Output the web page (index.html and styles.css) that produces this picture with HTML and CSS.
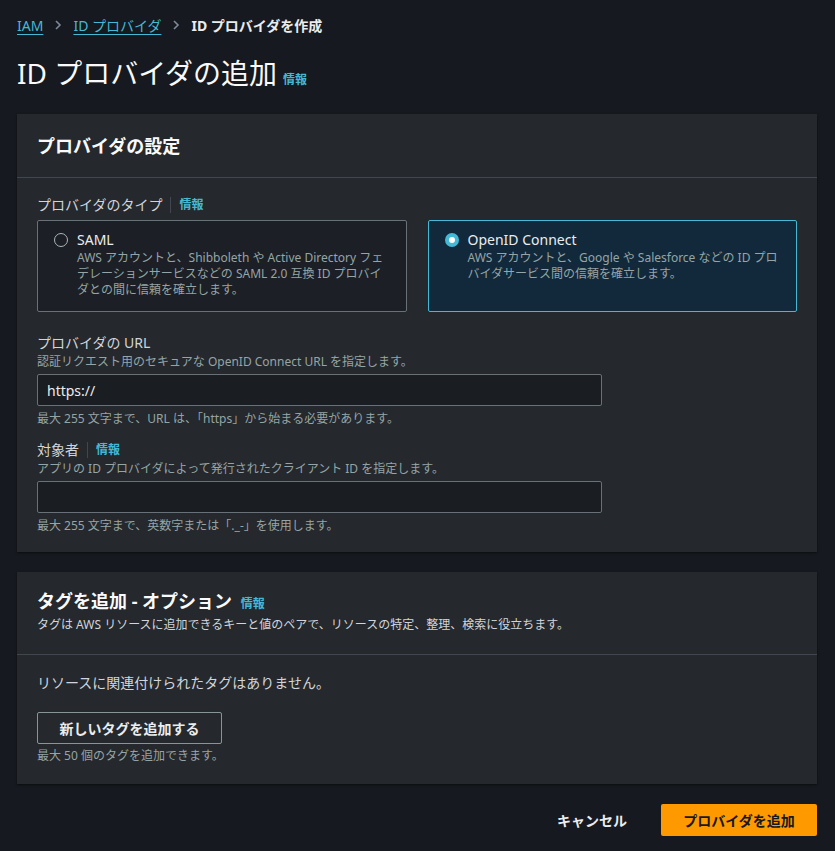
FILE: index.html
```html
<!DOCTYPE html>
<html lang="ja">
<head>
<meta charset="utf-8">
<link rel="stylesheet" href="styles.css">
</head>
<body>
<div class="page">
  <nav class="crumbs">
    <a class="crumb-link">IAM</a>
    <svg class="chev" width="12" height="12" viewBox="0 0 12 12"><path d="M4 2l4 4-4 4" fill="none" stroke="#7d8998" stroke-width="1.6"/></svg>
    <a class="crumb-link">ID プロバイダ</a>
    <svg class="chev" width="12" height="12" viewBox="0 0 12 12"><path d="M4 2l4 4-4 4" fill="none" stroke="#7d8998" stroke-width="1.6"/></svg>
    <span class="crumb-current">ID プロバイダを作成</span>
  </nav>

  <h1 class="page-title">ID プロバイダの追加 <a class="info">情報</a></h1>

  <section class="panel">
    <header class="panel-head">
      <h2 class="panel-title">プロバイダの設定</h2>
    </header>
    <div class="panel-body">
      <div class="field type-field">
        <div class="label">プロバイダのタイプ<span class="sep"></span><a class="info">情報</a></div>
        <div class="tiles">
          <div class="tile">
            <span class="radio"></span>
            <div class="tile-text">
              <div class="tile-name">SAML</div>
              <div class="tile-desc">AWS アカウントと、Shibboleth や Active Directory フェデレーションサービスなどの SAML 2.0 互換 ID プロバイダとの間に信頼を確立します。</div>
            </div>
          </div>
          <div class="tile selected">
            <span class="radio on"></span>
            <div class="tile-text">
              <div class="tile-name">OpenID Connect</div>
              <div class="tile-desc">AWS アカウントと、Google や Salesforce などの ID プロバイダサービス間の信頼を確立します。</div>
            </div>
          </div>
        </div>
      </div>

      <div class="field">
        <div class="label">プロバイダの URL</div>
        <div class="desc">認証リクエスト用のセキュアな OpenID Connect URL を指定します。</div>
        <div class="input">https://</div>
        <div class="hint">最大 255 文字まで、URL は、「https」から始まる必要があります。</div>
      </div>

      <div class="field">
        <div class="label">対象者<span class="sep"></span><a class="info">情報</a></div>
        <div class="desc">アプリの ID プロバイダによって発行されたクライアント ID を指定します。</div>
        <div class="input"></div>
        <div class="hint">最大 255 文字まで、英数字または「._-」を使用します。</div>
      </div>
    </div>
  </section>

  <section class="panel">
    <header class="panel-head tags-head">
      <h2 class="panel-title">タグを追加 - オプション <a class="info">情報</a></h2>
      <div class="head-desc">タグは AWS リソースに追加できるキーと値のペアで、リソースの特定、整理、検索に役立ちます。</div>
    </header>
    <div class="panel-body tags-body">
      <div class="empty">リソースに関連付けられたタグはありません。</div>
      <button class="btn-normal">新しいタグを追加する</button>
      <div class="hint">最大 50 個のタグを追加できます。</div>
    </div>
  </section>

  <div class="actions">
    <button class="btn-link">キャンセル</button>
    <button class="btn-primary">プロバイダを追加</button>
  </div>
</div>
</body>
</html>
```

FILE: styles.css
```css
* { box-sizing: border-box; }
html, body { margin: 0; padding: 0; }
body {
  background: #16191f;
  color: #d1d5db;
  font-family: "Noto Sans", "Noto Sans CJK JP", sans-serif;
  font-size: 14px;
}
.page {
  padding: 14px 18px 14px 17px;
}
.crumbs {
  display: flex;
  align-items: center;
  gap: 8px;
  height: 22px;
  font-size: 14px;
}
.crumb-link {
  color: #44b9d6;
  text-decoration: underline;
  text-underline-offset: 3px;
}
.chev { margin: 0 1px; }
.crumb-current {
  color: #eaeded;
  font-weight: 700;
}
.page-title {
  margin: 21px 0 0;
  font-size: 28px;
  font-weight: 400;
  color: #fafafa;
  line-height: 32px;
  display: flex;
  align-items: baseline;
  gap: 6px;
}
.info {
  color: #44b9d6;
  font-size: 12px;
  font-weight: 700;
}
.panel {
  background: #25282d;
  box-shadow: 0 1px 2px rgba(0,0,0,0.5);
  margin-top: 18px;
}
.panel + .panel { margin-top: 20px; }
.panel-head {
  padding: 16px 20px;
  border-bottom: 1px solid #414750;
  height: 64px;
  display: flex;
  flex-direction: column;
  justify-content: center;
}
.panel-title {
  margin: 0;
  font-size: 18px;
  font-weight: 700;
  color: #fafafa;
  line-height: 24px;
}
.panel-title .info { margin-left: 4px; }
.panel-body {
  padding: 16px 20px 18px;
}
.field + .field { margin-top: 12px; }
.type-field + .field { margin-top: 20px; }
.label {
  display: flex;
  align-items: center;
  font-size: 14px;
  color: #d1d5db;
  line-height: 22px;
}
.sep {
  display: inline-block;
  width: 1px;
  height: 16px;
  background: #414750;
  margin: 0 8px;
}
.tiles {
  display: grid;
  grid-template-columns: 1fr 1fr;
  gap: 21px;
  margin-top: 4px;
}
.tile {
  display: flex;
  gap: 9px;
  border: 1px solid #687078;
  background: #1c1f25;
  padding: 9px 16px 12px 16px;
  height: 92px;
  border-radius: 2px;
}
.tile.selected {
  border-color: #44b9d6;
  background: #12293b;
}
.radio {
  flex: none;
  width: 14px;
  height: 14px;
  border-radius: 50%;
  border: 1.5px solid #aab7b8;
  margin-top: 3px;
}
.radio.on {
  border: 4px solid #44b9d6;
  background: #fff;
}
.tile-name {
  color: #eaeded;
  font-size: 14px;
  line-height: 20px;
}
.tile-desc {
  color: #95a5a6;
  font-size: 12px;
  line-height: 16px;
}
.desc {
  color: #95a5a6;
  font-size: 12px;
  line-height: 16px;
}
.input {
  margin-top: 4px;
  width: 565px;
  height: 32px;
  border: 1px solid #687078;
  background: #1a1d22;
  border-radius: 2px;
  padding: 0 9px;
  display: flex;
  align-items: center;
  color: #eaeded;
  font-size: 14px;
}
.hint {
  color: #95a5a6;
  font-size: 12px;
  line-height: 16px;
  margin-top: 5px;
}
.tags-head {
  height: 83px;
  justify-content: center;
  padding-top: 12px;
}
.head-desc {
  font-size: 12px;
  color: #d1d5db;
  line-height: 18px;
}
.tags-body {
  padding: 17px 20px 20px;
}
.empty {
  font-size: 14px;
  line-height: 22px;
  color: #d1d5db;
}
.btn-normal {
  margin-top: 18px;
  display: block;
  background: transparent;
  color: #eaeded;
  border: 1px solid #879596;
  border-radius: 2px;
  font-family: inherit;
  font-size: 14px;
  font-weight: 700;
  height: 32px;
  width: 185px;
}
.tags-body .hint { margin-top: 4px; }
.actions {
  display: flex;
  justify-content: flex-end;
  align-items: center;
  gap: 12px;
  margin-top: 20px;
}
.btn-link {
  background: transparent;
  border: 0;
  color: #eaeded;
  font-family: inherit;
  font-size: 14px;
  font-weight: 700;
  padding: 0 22px;
  height: 32px;
}
.btn-primary {
  background: #ff9900;
  border: 0;
  border-radius: 2px;
  color: #16191f;
  font-family: inherit;
  font-size: 14px;
  font-weight: 700;
  height: 32px;
  width: 156px;
}
```
